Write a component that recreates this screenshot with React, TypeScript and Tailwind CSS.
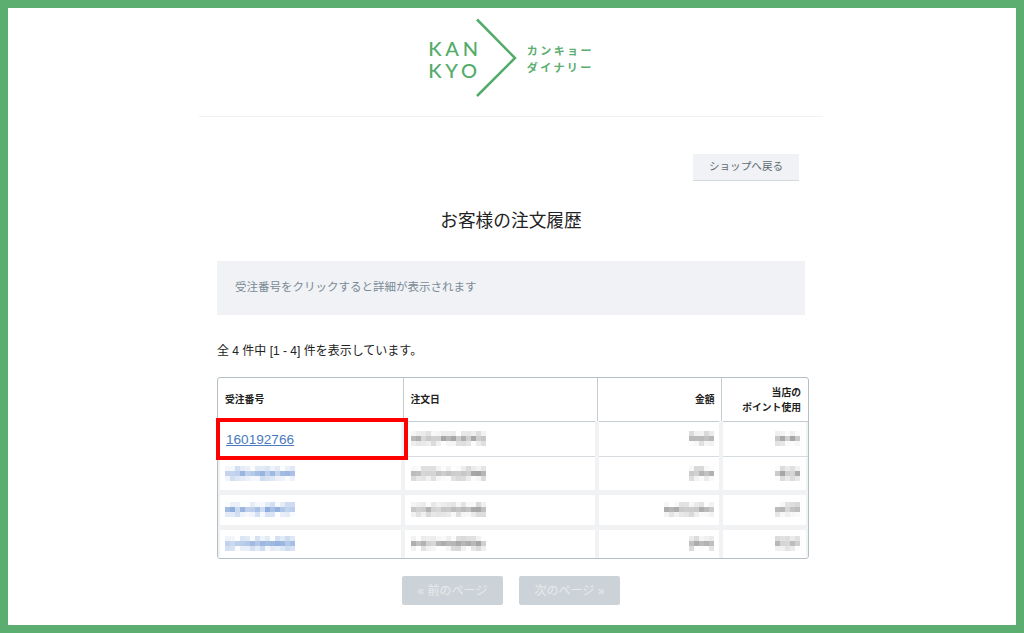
const jp = "font-['Helvetica_Neue','Liberation_Sans','Noto_Sans_CJK_JP',sans-serif]";

// Small deterministic noise so the redacted cells look like the mosaic in the shot.
function Mosaic({ cols, seed, tone }: { cols: number; seed: number; tone: "gray" | "blue" }) {
  const cells = Array.from({ length: cols * 3 }, (_, i) => {
    const n = Math.abs(Math.sin((i + 1) * 12.9898 + seed * 78.233) * 43758.5453) % 1;
    const mid = i >= cols && i < cols * 2;
    return mid ? 0.3 + n * 0.4 : n * 0.3;
  });
  return (
    <div
      className="grid h-[15px] shrink-0"
      style={{ gridTemplateColumns: `repeat(${cols}, 5px)`, gridTemplateRows: "repeat(3, 5px)" }}
    >
      {cells.map((a, i) => (
        <span
          key={i}
          style={{ background: tone === "blue" ? `rgba(90,135,205,${a})` : `rgba(125,125,125,${a})` }}
        />
      ))}
    </div>
  );
}

const rows = [
  { date: 15, dateSeed: 1, total: 5, totalSeed: 2, pt: 5, ptSeed: 3 },
  { id: 14, date: 15, dateSeed: 5, total: 5, totalSeed: 6, pt: 5, ptSeed: 7 },
  { id: 14, date: 15, dateSeed: 9, total: 10, totalSeed: 10, pt: 5, ptSeed: 11 },
  { id: 14, date: 15, dateSeed: 13, total: 5, totalSeed: 14, pt: 5, ptSeed: 15 },
];

function Logo() {
  return (
    <div className="flex h-[109px] items-center justify-center border-b border-[#f1f2f3] pb-[8px]">
      <div className="flex items-center">
        <div className="flex flex-col gap-[3px] pt-[2px] font-['Lato',sans-serif] text-[20px] font-medium leading-[19px] tracking-[3.8px] text-[#54ab6a]">
          <span>KAN</span>
          <span>KYO</span>
        </div>
        <svg width="46" height="80" viewBox="0 0 46 80" className="-ml-[11px] text-[#54ab6a]">
          <path d="M6 1.5 44 40 6 78" fill="none" stroke="currentColor" strokeWidth="2.5" />
        </svg>
        <div className="ml-[10px] flex flex-col gap-[4px] pt-[1px] font-['Noto_Sans_CJK_JP',sans-serif] text-[11px] font-bold leading-[13px] tracking-[2.4px] text-[#5bae6f]">
          <span>カンキョー</span>
          <span>ダイナリー</span>
        </div>
      </div>
    </div>
  );
}

function Pager({ children }: { children: React.ReactNode }) {
  return (
    <button className="flex h-[29px] w-[101px] items-center justify-center rounded-[2px] bg-[#ccd3d8] text-[12px] text-[#e6eaec]">
      {children}
    </button>
  );
}

export default function App() {
  return (
    <div className={`h-[633px] w-[1024px] overflow-hidden border-8 border-[#5bae6f] bg-white ${jp}`}>
      <div className="mx-auto w-[624px] -translate-x-[1px]">
        <Logo />

        <div className="flex justify-end pr-[24px] pt-[37px]">
          <button className="h-[27px] w-[106px] border-b border-[#d3dade] bg-[#f0f2f5] text-[10.6px] text-[#5f6b73]">
            ショップへ戻る
          </button>
        </div>

        <h1 className="mt-[26px] text-center text-[17.7px] leading-[28px] text-[#222]">お客様の注文履歴</h1>

        <div className="mx-[18px] mt-[26px] w-[588px]">
          <div className="flex h-[54px] items-center bg-[#f0f2f5] px-[18px] text-[11.5px] text-[#7b8a95]">
            受注番号をクリックすると詳細が表示されます
          </div>

          <p className="mt-[28px] text-[12px] leading-[16px] text-[#222]">全 4 件中 [1 - 4] 件を表示しています。</p>

          <div className="relative mt-[18px] w-[592px] overflow-hidden rounded-[3px] border border-[#b4bfc4]">
            <table className="w-full table-fixed border-collapse text-[9.8px] text-[#222]">
              <colgroup>
                <col className="w-[185px]" />
                <col className="w-[194px]" />
                <col className="w-[124px]" />
                <col />
              </colgroup>
              <thead>
                <tr className="h-[43px] border-b border-[#c3ccd0] font-bold">
                  <th className="border-r border-[#c3ccd0] pl-[7px] pt-[2px] text-left">受注番号</th>
                  <th className="border-r border-[#c3ccd0] pl-[7px] pt-[2px] text-left">注文日</th>
                  <th className="border-r border-[#c3ccd0] pr-[6px] pt-[2px] text-right">金額</th>
                  <th className="pr-[7px] pt-[2px] text-right leading-[15px]">
                    当店の
                    <br />
                    ポイント使用
                  </th>
                </tr>
              </thead>
              <tbody>
                {rows.map((r, i) => (
                  <tr
                    key={i}
                    className={
                      i === 0
                        ? "h-[35px] border-b border-[#d5dbde]"
                        : i === 1
                          ? "h-[36px] border-b-[5px] border-[#f0f2f3]"
                          : i === 2
                            ? "h-[35px] border-b-[5px] border-[#f0f2f3]"
                            : "h-[31px]"
                    }
                  >
                    <td className="border-r-[4px] border-[#f0f2f3] pl-[7px] shadow-[inset_2px_0_0_#f0f2f3]">
                      {r.id ? (
                        <Mosaic cols={r.id} seed={i + 20} tone="blue" />
                      ) : (
                        <span className="ml-[1px] block pt-[4px]">
                          <a href="#" className="font-['Liberation_Sans',sans-serif] text-[13.6px] text-[#4a7bc0] underline">
                            160192766
                          </a>
                        </span>
                      )}
                    </td>
                    <td className="border-r-[4px] border-[#f0f2f3] pl-[6px]">
                      <Mosaic cols={r.date} seed={r.dateSeed} tone="gray" />
                    </td>
                    <td className="border-r-[4px] border-[#f0f2f3] pr-[5px]">
                      <div className="flex justify-end">
                        <Mosaic cols={r.total} seed={r.totalSeed} tone="gray" />
                      </div>
                    </td>
                    <td className="pr-[8px] shadow-[inset_-2px_0_0_#f0f2f3]">
                      <div className="flex justify-end">
                        <Mosaic cols={r.pt} seed={r.ptSeed} tone="gray" />
                      </div>
                    </td>
                  </tr>
                ))}
              </tbody>
            </table>
          </div>

          <div className="mt-[17px] flex justify-center gap-[16px]">
            <Pager>« 前のページ</Pager>
            <Pager>次のページ »</Pager>
          </div>
        </div>
      </div>

      {/* highlight drawn over the first order row */}
      <div className="absolute left-[216px] top-[418px] h-[42px] w-[192px] border-[4px] border-[#ff0000]" />
    </div>
  );
}
